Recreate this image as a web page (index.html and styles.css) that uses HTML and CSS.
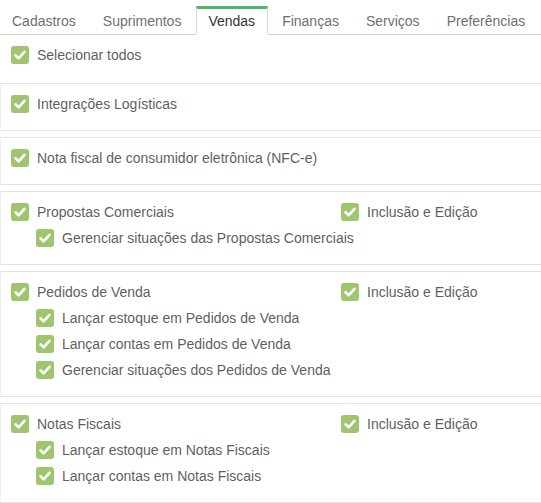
FILE: index.html
```html
<!DOCTYPE html>
<html lang="pt">
<head>
<meta charset="utf-8">
<link rel="stylesheet" href="styles.css">
</head>
<body>
<nav class="tabs">
  <div class="tab">Cadastros</div>
  <div class="tab">Suprimentos</div>
  <div class="tab active">Vendas</div>
  <div class="tab">Finanças</div>
  <div class="tab">Serviços</div>
  <div class="tab">Preferências</div>
</nav>

<div class="select-all">
  <label class="row"><span class="cb"><svg viewBox="0 0 18 18"><path d="M4.5 9.3 L7.6 12.3 L13.5 5.8"/></svg></span>Selecionar todos</label>
</div>

<section class="panel">
  <label class="row"><span class="cb"><svg viewBox="0 0 18 18"><path d="M4.5 9.3 L7.6 12.3 L13.5 5.8"/></svg></span>Integrações Logísticas</label>
</section>

<section class="panel">
  <label class="row"><span class="cb"><svg viewBox="0 0 18 18"><path d="M4.5 9.3 L7.6 12.3 L13.5 5.8"/></svg></span>Nota fiscal de consumidor eletrônica (NFC-e)</label>
</section>

<section class="panel">
  <div class="head">
    <label class="row"><span class="cb"><svg viewBox="0 0 18 18"><path d="M4.5 9.3 L7.6 12.3 L13.5 5.8"/></svg></span>Propostas Comerciais</label>
    <label class="row"><span class="cb"><svg viewBox="0 0 18 18"><path d="M4.5 9.3 L7.6 12.3 L13.5 5.8"/></svg></span>Inclusão e Edição</label>
  </div>
  <label class="row sub"><span class="cb"><svg viewBox="0 0 18 18"><path d="M4.5 9.3 L7.6 12.3 L13.5 5.8"/></svg></span>Gerenciar situações das Propostas Comerciais</label>
</section>

<section class="panel">
  <div class="head">
    <label class="row"><span class="cb"><svg viewBox="0 0 18 18"><path d="M4.5 9.3 L7.6 12.3 L13.5 5.8"/></svg></span>Pedidos de Venda</label>
    <label class="row"><span class="cb"><svg viewBox="0 0 18 18"><path d="M4.5 9.3 L7.6 12.3 L13.5 5.8"/></svg></span>Inclusão e Edição</label>
  </div>
  <label class="row sub"><span class="cb"><svg viewBox="0 0 18 18"><path d="M4.5 9.3 L7.6 12.3 L13.5 5.8"/></svg></span>Lançar estoque em Pedidos de Venda</label>
  <label class="row sub"><span class="cb"><svg viewBox="0 0 18 18"><path d="M4.5 9.3 L7.6 12.3 L13.5 5.8"/></svg></span>Lançar contas em Pedidos de Venda</label>
  <label class="row sub"><span class="cb"><svg viewBox="0 0 18 18"><path d="M4.5 9.3 L7.6 12.3 L13.5 5.8"/></svg></span>Gerenciar situações dos Pedidos de Venda</label>
</section>

<section class="panel">
  <div class="head">
    <label class="row"><span class="cb"><svg viewBox="0 0 18 18"><path d="M4.5 9.3 L7.6 12.3 L13.5 5.8"/></svg></span>Notas Fiscais</label>
    <label class="row"><span class="cb"><svg viewBox="0 0 18 18"><path d="M4.5 9.3 L7.6 12.3 L13.5 5.8"/></svg></span>Inclusão e Edição</label>
  </div>
  <label class="row sub"><span class="cb"><svg viewBox="0 0 18 18"><path d="M4.5 9.3 L7.6 12.3 L13.5 5.8"/></svg></span>Lançar estoque em Notas Fiscais</label>
  <label class="row sub"><span class="cb"><svg viewBox="0 0 18 18"><path d="M4.5 9.3 L7.6 12.3 L13.5 5.8"/></svg></span>Lançar contas em Notas Fiscais</label>
</section>
</body>
</html>
```

FILE: styles.css
```css
html, body {
  margin: 0;
  padding: 0;
  background: #fff;
}
body {
  font-family: "Liberation Sans", Arial, sans-serif;
  font-size: 14px;
  color: #5f5f5f;
  overflow: hidden;
}
.tabs {
  display: flex;
  height: 28px;
  padding-top: 6px;
  padding-left: 0;
  border-bottom: 1px solid #cfcfcf;
}
.tab {
  box-sizing: border-box;
  height: 29px;
  padding: 4px 12px 0 11px;
  margin-right: 2px;
  border: 1px solid transparent;
  border-top: 3px solid transparent;
  color: #6f6f6f;
  white-space: nowrap;
}
.tab.active {
  background: #fff;
  color: #333;
  border-color: #dcdcdc;
  border-top-color: #4cb56e;
  border-bottom-color: #fff;
}
.select-all {
  padding: 7px 0 15px 11px;
}
.panel {
  border-top: 1px solid #e4e4e4;
  border-bottom: 1px solid #e4e4e4;
  border-left: 1px solid #f0f0f0;
  padding: 7px 0 13px 10px;
  margin-bottom: 6px;
}
.row {
  display: flex;
  align-items: center;
  height: 26px;
  gap: 8px;
  white-space: nowrap;
}
.head {
  display: grid;
  grid-template-columns: 330px 1fr;
}
.sub {
  margin-left: 25px;
}
.cb {
  flex: none;
  width: 18px;
  height: 18px;
  border-radius: 3px;
  background: #9fc56f;
  display: flex;
}
.cb svg {
  width: 18px;
  height: 18px;
}
.cb path {
  fill: none;
  stroke: #fff;
  stroke-width: 2.6;
  stroke-linecap: round;
  stroke-linejoin: round;
}
```
